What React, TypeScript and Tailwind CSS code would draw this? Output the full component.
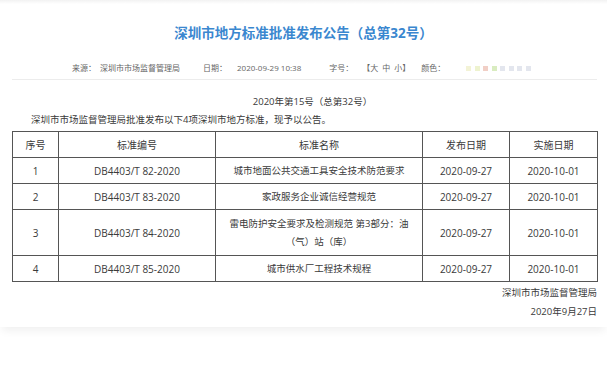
import React from 'react';

const rows = [
  { no: '1', code: 'DB4403/T 82-2020', name: ['城市地面公共交通工具安全技术防范要求'], pub: '2020-09-27', impl: '2020-10-01' },
  { no: '2', code: 'DB4403/T 83-2020', name: ['家政服务企业诚信经营规范'], pub: '2020-09-27', impl: '2020-10-01' },
  { no: '3', code: 'DB4403/T 84-2020', name: ['雷电防护安全要求及检测规范 第3部分：油', '（气）站（库）'], pub: '2020-09-27', impl: '2020-10-01' },
  { no: '4', code: 'DB4403/T 85-2020', name: ['城市供水厂工程技术规程'], pub: '2020-09-27', impl: '2020-10-01' },
];

const swatches = ['#f3f3d6', '#eef3cf', '#f1cfc6', '#d9ecc0', '#e3e6ee', '#e3e6ee', '#e3e6ee', '#e3e6ee'];

export default function App() {
  return (
    <div
      className="w-[607px] h-[366px] bg-white overflow-hidden text-[#3a3a3a]"
      style={{ fontFamily: '"Open Sans", "Noto Sans CJK SC", sans-serif' }}
    >
      <div className="h-[4px] bg-gradient-to-b from-[#f2f2f2] to-white" />
      <div className="bg-white shadow-[0_6px_8px_-2px_rgba(0,0,0,0.06)] pb-[8px]">
        <h1 className="mt-[18px] text-center text-[13.5px] font-bold leading-[22px] text-[#3a87cf]">
          深圳市地方标准批准发布公告（总第32号）
        </h1>

        <div className="mt-[18px] flex items-center pl-[72px] text-[8px] leading-[12px] text-[#666]">
          <span>来源：</span>
          <span className="ml-[4px]">深圳市市场监督管理局</span>
          <span className="ml-[23px]">日期：</span>
          <span className="ml-[10px]">2020-09-29 10:38</span>
          <span className="ml-[28px]">字号：</span>
          <span className="ml-[9px] flex gap-[4px]">
            <span>【大</span>
            <span>中</span>
            <span>小】</span>
          </span>
          <span className="ml-[11px]">颜色：</span>
          <span className="ml-[21px] flex gap-[3.5px]">
            {swatches.map((c, i) => (
              <span key={i} className="block w-[5px] h-[5px]" style={{ backgroundColor: c }} />
            ))}
          </span>
        </div>

        <div className="ml-[12px] mr-[10px] mt-[5px] border-t border-[#ececec]" />

        <div className="ml-[12px] mr-[10px]">
          <p className="mt-[15px] text-center text-[9.5px] leading-[14px] pl-[16px]">2020年第15号（总第32号）</p>
          <p className="mt-[4px] text-[9.5px] leading-[14px] indent-[2em]">
            深圳市市场监督管理局批准发布以下4项深圳市地方标准，现予以公告。
          </p>

          <table className="mt-[4px] w-[585px] border-collapse table-fixed text-[10px] leading-[18px]">
            <colgroup>
              <col className="w-[46px]" />
              <col className="w-[157px]" />
              <col className="w-[207px]" />
              <col className="w-[87px]" />
              <col className="w-[88px]" />
            </colgroup>
            <thead>
              <tr className="h-[26px]">
                <th className="border border-[#555] font-normal text-center">序号</th>
                <th className="border border-[#555] font-normal text-center">标准编号</th>
                <th className="border border-[#555] font-normal text-center">标准名称</th>
                <th className="border border-[#555] font-normal text-center">发布日期</th>
                <th className="border border-[#555] font-normal text-center">实施日期</th>
              </tr>
            </thead>
            <tbody>
              {rows.map((r) => (
                <tr key={r.no} className={r.name.length > 1 ? 'h-[46px]' : 'h-[26px]'}>
                  <td className="border border-[#555] text-center">{r.no}</td>
                  <td className="border border-[#555] text-center">{r.code}</td>
                  <td className="border border-[#555] text-center px-[6px] text-[9.5px]">
                    {r.name.map((line, i) => (
                      <div key={i}>{line}</div>
                    ))}
                  </td>
                  <td className="border border-[#555] text-center">{r.pub}</td>
                  <td className="border border-[#555] text-center">{r.impl}</td>
                </tr>
              ))}
            </tbody>
          </table>

          <p className="mt-[4px] text-right text-[9.5px] leading-[14px]">深圳市市场监督管理局</p>
          <p className="mt-[5px] text-right text-[9.5px] leading-[14px]">2020年9月27日</p>
        </div>
      </div>
    </div>
  );
}
